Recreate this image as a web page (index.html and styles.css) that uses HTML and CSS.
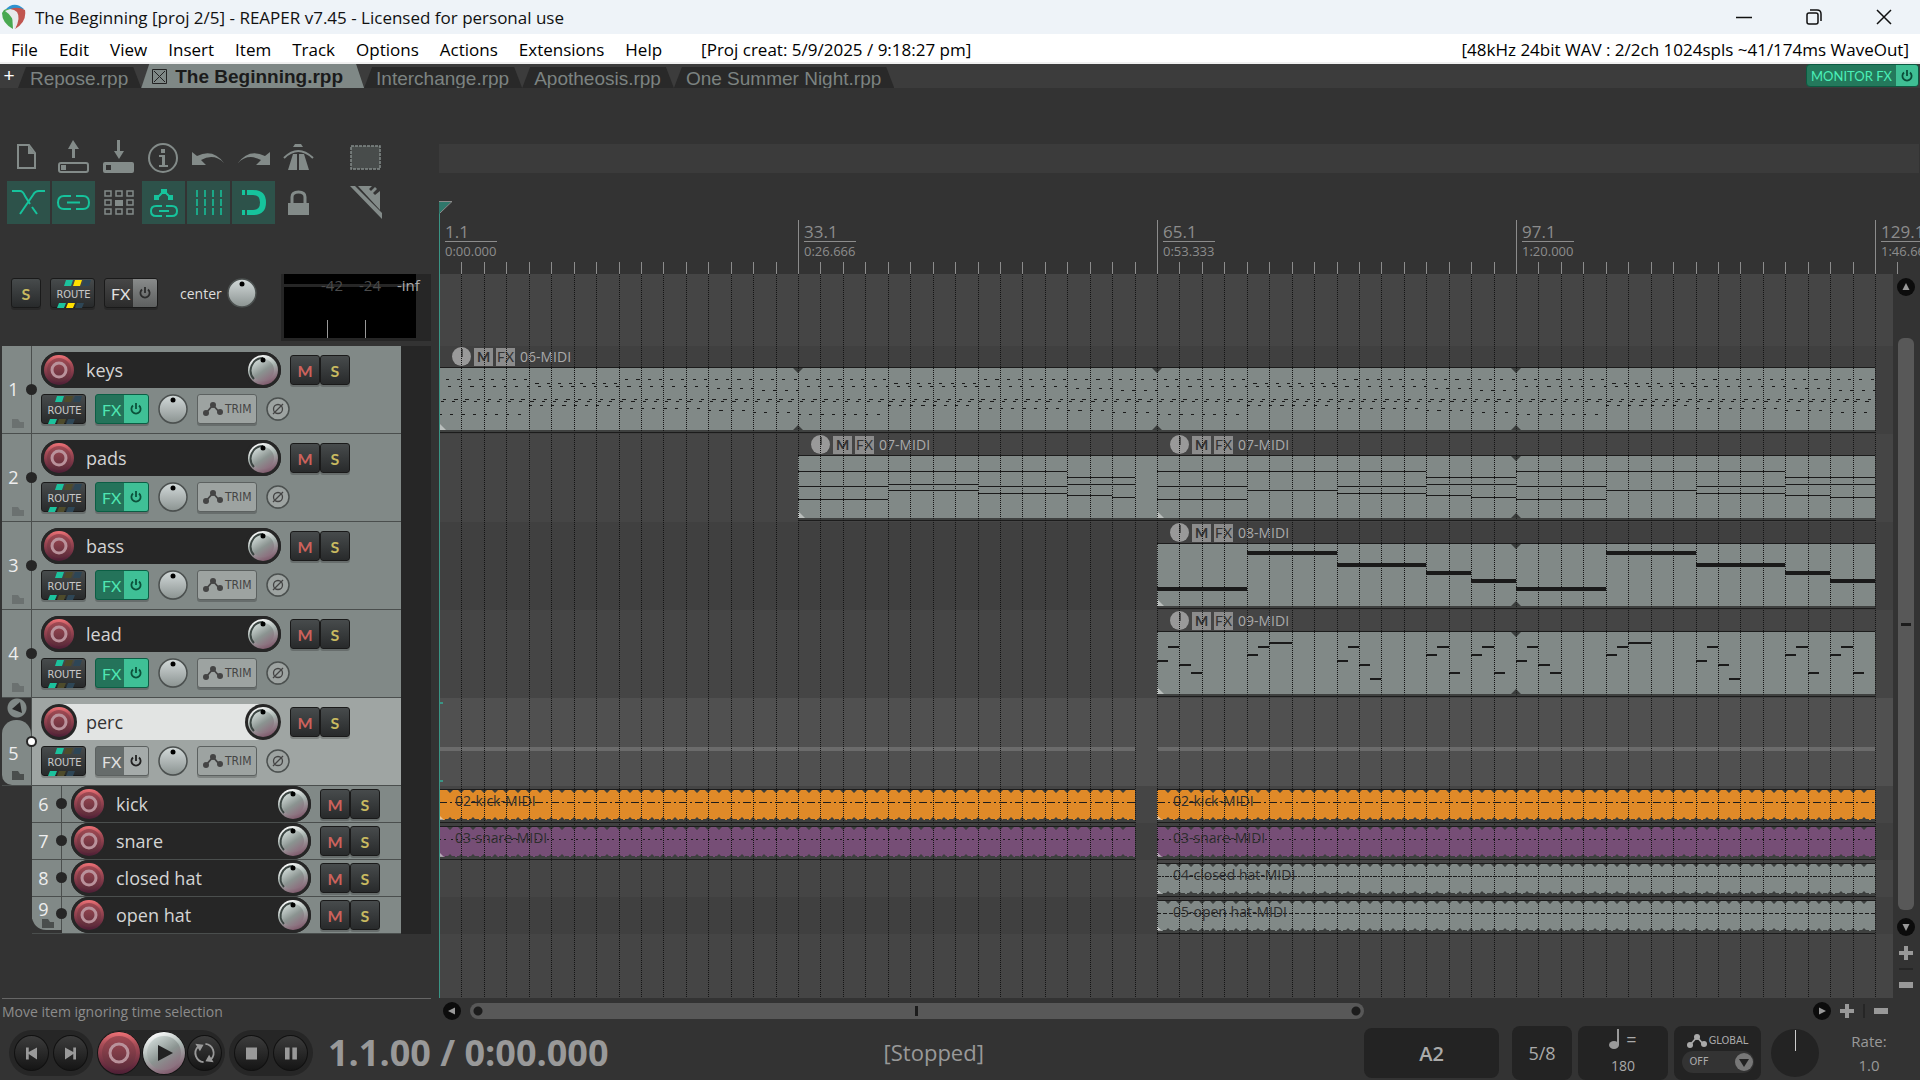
FILE: index.html
```html
<!DOCTYPE html>
<html lang="en">
<head>
    <meta charset="utf-8">
    <title>The Beginning [proj 2/5] - REAPER v7.45</title>
    <meta name="viewport" content="width=device-width, initial-scale=1">
    <link rel="stylesheet" href="styles.css">
</head>
<body>
    <!-- shared icons -->
    <svg class="defs" width="0" height="0" aria-hidden="true">
        <defs>
            <linearGradient id="g-rec" x1="0" y1="0" x2="0" y2="1">
                <stop offset="0" stop-color="#f07277"/><stop offset=".3" stop-color="#a74d57"/><stop offset="1" stop-color="#4d1f35"/>
            </linearGradient>
            <linearGradient id="g-rec-in" x1="0" y1="0" x2="0" y2="1">
                <stop offset="0" stop-color="#a04a53"/><stop offset="1" stop-color="#5c2c3a"/>
            </linearGradient>
            <linearGradient id="g-vol" x1=".3" y1="0" x2=".7" y2="1">
                <stop offset="0" stop-color="#fff"/><stop offset=".45" stop-color="#a9b5b1"/><stop offset="1" stop-color="#7d5468"/>
            </linearGradient>
            <linearGradient id="g-vol-in" x1=".2" y1=".1" x2=".8" y2="1">
                <stop offset="0" stop-color="#c9d3d0"/><stop offset=".5" stop-color="#8b9491"/><stop offset="1" stop-color="#8d6a7c"/>
            </linearGradient>
            <linearGradient id="g-pan" x1="0" y1="0" x2="0" y2="1">
                <stop offset="0" stop-color="#d3dada"/><stop offset="1" stop-color="#8b9391"/>
            </linearGradient>
        </defs>
        <symbol id="rec" viewBox="0 0 36 36">
            <circle cx="18" cy="18" r="18" fill="#262626"/>
            <circle cx="18" cy="18" r="15" fill="url(#g-rec)"/>
            <circle cx="18" cy="18" r="12" fill="url(#g-rec-in)"/>
            <circle cx="18" cy="18" r="7" fill="none" stroke="#b9929b" stroke-width="3"/>
        </symbol>
        <symbol id="volume" viewBox="0 0 36 36">
            <circle cx="18" cy="18" r="18" fill="#262626"/>
            <circle cx="18" cy="18" r="15" fill="url(#g-vol)"/>
            <circle cx="18" cy="18" r="11" fill="url(#g-vol-in)"/>
            <path d="M9 27A12.500 12.500 0 0 1 18 6" fill="none" stroke="#3b4542" stroke-width="2"/>
            <circle cx="18" cy="8" r="2.500" fill="#000"/>
        </symbol>
        <symbol id="pan" viewBox="0 0 30 30">
            <circle cx="15" cy="16" r="14" fill="#0003"/>
            <circle cx="15" cy="15" r="14" fill="url(#g-pan)" stroke="#4b504f" stroke-width="1.500"/>
            <circle cx="15" cy="6" r="2.500" fill="#000"/>
        </symbol>
        <symbol id="power" viewBox="0 0 14 14">
            <path d="M4 3.500a4.600 4.600 0 1 0 6 0M7 1v6" fill="none" stroke="currentColor" stroke-width="1.800"/>
        </symbol>
        <symbol id="stripes" viewBox="0 0 45 30">
            <path d="M15 1h7l-2 6h-7zM8 24h7l-2 5H6z" fill="#1cc29d"/>
            <path class="mid" d="M24 1h7l-2 6h-7zM17 24h7l-2 5h-7z"/>
            <path d="M33 1h7l-2 6h-7zM26 24h7l-2 5h-7z" fill="#2e4656"/>
        </symbol>
        <symbol id="env" viewBox="0 0 20 14">
            <path d="M3 11l7-8 7 8" fill="none" stroke="currentColor" stroke-width="1.800"/>
            <circle cx="3" cy="11" r="3" fill="currentColor"/><circle cx="10" cy="3" r="3" fill="currentColor"/><circle cx="17" cy="10" r="3" fill="currentColor"/>
        </symbol>
        <symbol id="phase" viewBox="0 0 24 25">
            <circle cx="12" cy="13" r="11" fill="#0003"/>
            <circle cx="12" cy="12" r="11" fill="#9da3a1" stroke="#4b504f" stroke-width="1.500"/>
            <circle cx="12" cy="12" r="4.500" fill="none" stroke="#444" stroke-width="1.300"/><path d="M7 17L17 7" stroke="#444" stroke-width="1.300"/>
        </symbol>
        <symbol id="folder" viewBox="0 0 12 9"><path d="M0 0h6l2 3h4v6H0z" fill="currentColor"/></symbol>
        <symbol id="arrow" viewBox="0 0 18 18"><circle cx="9" cy="9" r="9" fill="#0c0c0c"/><path d="M9 5l3.500 7h-7z" fill="#999"/></symbol>
        <symbol id="plus" viewBox="0 0 14 14"><path d="M5 0h4v5h5v4H9v5H5V9H0V5h5z" fill="#999"/></symbol>
        <symbol id="minus" viewBox="0 0 14 14"><path d="M0 4h14v6H0z" fill="#999"/></symbol>
    </svg>

    <header class="titlebar">
        <svg class="logo" width="24" height="26" viewBox="0 0 24 26">
            <path d="M3 6Q12-4 22 5l-5 3Q9 3 3 6z" fill="#2e93d0"/>
            <path d="M2 6q6-3 8 2l1 17Q0 19 0 9z" fill="#49a851"/>
            <path d="M8 5q8-3 15 1 2 12-10 19 4-9 1-14-2-4-6-6z" fill="#c0554f"/>
            <path d="M3 7q7-4 12 1 4 6-2 17l-1 0Q13 13 3 7z" fill="#e7eaec"/>
        </svg>
        <h1>The Beginning [proj 2/5] - REAPER v7.45 - Licensed for personal use</h1>
        <div class="window-buttons">
            <button type="button" aria-label="Minimize"><svg width="16" height="16" viewBox="0 0 16 16"><path d="M0 8.500h16"/></svg></button>
            <button type="button" aria-label="Restore"><svg width="16" height="16" viewBox="0 0 16 16"><rect x="1" y="4" width="11" height="11" rx="2"/><path d="M4 1h7q4 0 4 4v7"/></svg></button>
            <button type="button" aria-label="Close"><svg width="16" height="16" viewBox="0 0 16 16"><path d="M1 1l14 14M15 1L1 15"/></svg></button>
        </div>
    </header>

    <nav class="menubar">
        <a href="#">File</a>
        <a href="#">Edit</a>
        <a href="#">View</a>
        <a href="#">Insert</a>
        <a href="#">Item</a>
        <a href="#">Track</a>
        <a href="#">Options</a>
        <a href="#">Actions</a>
        <a href="#">Extensions</a>
        <a href="#">Help</a>
        <span class="created">[Proj creat: 5/9/2025 / 9:18:27 pm]</span>
        <span class="audio">[48kHz 24bit WAV : 2/2ch 1024spls ~41/174ms WaveOut]</span>
    </nav>

    <div class="tabs">
        <button type="button" class="add-tab">+</button>
        <button type="button" class="tab">Repose.rpp</button>
        <button type="button" class="tab active"><svg width="15" height="15" viewBox="0 0 15 15"><path d="M.5.500h14v14H.5zM2 2l11 11M13 2L2 13"/></svg>The Beginning.rpp</button>
        <button type="button" class="tab">Interchange.rpp</button>
        <button type="button" class="tab">Apotheosis.rpp</button>
        <button type="button" class="tab">One Summer Night.rpp</button>
        <button type="button" class="monitor-fx">MONITOR FX<i><svg width="14" height="14"><use href="#power"/></svg></i></button>
    </div>

    <main class="workspace">
        <section class="left">
            <div class="toolbar">
                <button type="button" aria-label="New project"><svg viewBox="0 0 43 43"><path class="line" d="M11 9h11l6 8v15H11z"/><path d="M21 9v9h7z"/></svg></button>
                <button type="button" aria-label="Open project"><svg viewBox="0 0 43 43"><rect class="line" x="7" y="27" width="29" height="9" rx="2"/><path d="M9 29h5v5H9zM20 22V13h-4l5-9 6 9h-4v9z"/></svg></button>
                <button type="button" aria-label="Save project"><svg viewBox="0 0 43 43"><path fill-rule="evenodd" d="M8 26h27q2 0 2 2v7q0 2-2 2H8q-2 0-2-2v-7q0-2 2-2zm1 3v5h5v-5zM20 4v11h-3l5 8 5-8h-4V4z"/></svg></button>
                <button type="button" aria-label="Project settings"><svg viewBox="0 0 43 43"><circle class="line" cx="21" cy="22" r="14"/><path d="M19 13h4v4h-4zM17 19h6v10h3v2h-9v-2h3v-8h-3z"/></svg></button>
                <button type="button" aria-label="Undo"><svg viewBox="0 0 43 43"><path d="M5 16v13h14l-5-5q13-7 23 3Q26 12 10 20z"/></svg></button>
                <button type="button" aria-label="Redo"><svg viewBox="0 0 43 43"><path d="M38 16v13H24l5-5Q16 17 6 27q11-15 27-7z"/></svg></button>
                <button type="button" aria-label="Metronome"><svg viewBox="0 0 43 43"><path class="line" d="M7 22q14-14 29 0"/><path d="M18 8h6l2 3H16zM16 18h4v16h-9zM22 18h5l5 16H22z"/></svg></button>
                <button type="button" class="apart" aria-label="Marquee"><svg viewBox="0 0 43 43"><rect x="7" y="10" width="29" height="23" fill="#484c4b" stroke="#838b89" stroke-width="1.500" stroke-dasharray="3 1"/></svg></button>

                <button type="button" class="on" aria-label="Auto-crossfade"><svg viewBox="0 0 43 43"><path class="line" d="M5 10h8q3 0 5 5l5 8M25 26l5 7M13 33l13-19q2-4 6-4h6"/></svg></button>
                <button type="button" class="on" aria-label="Item grouping"><svg viewBox="0 0 43 43"><path class="line" d="M19 15h-7q-6 0-6 6.500t6 6.500h7M24 15h7q6 0 6 6.500t-6 6.500h-7M15 21.500h13"/></svg></button>
                <button type="button" aria-label="Ripple editing"><svg viewBox="0 0 43 43"><path class="thin" d="M8 10h6v5H8zM19 10h6v5h-6zM30 10h6v5h-6zM8 19h6v5H8zM30 19h6v5h-6zM8 28h6v5H8zM19 28h6v5h-6zM30 28h6v5h-6z"/><path d="M18 19h8v6h-8z"/></svg></button>
                <button type="button" class="on" aria-label="Move envelopes with items"><svg viewBox="0 0 43 43"><path class="line" d="M15 17l7-7 7 7M20 25h-6q-5 0-5 5t5 5h6M24 25h6q5 0 5 5t-5 5h-6M17 30h10"/><path d="M19 8h6v5h-6zM12 14h5v5h-5zM26 14h5v5h-5z"/></svg></button>
                <button type="button" class="on" aria-label="Grid lines"><svg viewBox="0 0 43 43"><path class="thin" d="M10 9v25M18 9v25M26 9v25M34 9v25" stroke-dasharray="7 2"/></svg></button>
                <button type="button" class="on" aria-label="Snapping"><svg viewBox="0 0 43 43"><path d="M15 9h6q13 0 13 12.500T21 34h-6v-5h6q7 0 7-7.500T21 14h-6zM10 9h3v5h-3zM10 29h3v5h-3z"/></svg></button>
                <button type="button" aria-label="Locking"><svg viewBox="0 0 43 43"><path d="M11 22h21v12H11z"/><path d="M15 22v-6q0-5 6.500-5t6.500 5v6" fill="none" stroke="#838b89" stroke-width="3"/></svg></button>
                <button type="button" class="apart" aria-label="Razor edit"><svg viewBox="0 0 43 43"><path d="M6 5h5l27 27v6zM14 5h14l-3 3 2 2 4-4 2 2-4 4 2 2 5-4v19z"/></svg></button>
            </div>

            <div class="master">
                <button type="button" class="btn solo">S</button>
                <button type="button" class="btn route bright"><svg width="45" height="30"><use href="#stripes"/></svg><span>ROUTE</span></button>
                <button type="button" class="btn fx dim">FX<i><svg width="14" height="14"><use href="#power"/></svg></i></button>
                <label class="pan-label">center <span class="knob pan"><svg><use href="#pan"/></svg><input type="range"></span></label>
                <div class="meter"><div class="screen"><span>-42</span><span>-24</span><span class="peak">-inf</span></div></div>
            </div>

            <div class="tracks"></div>

            <p class="status">Move item ignoring time selection</p>
        </section>

        <section class="right">
            <div class="region-lane"></div>
            <div class="ruler"></div>
            <div class="arrange">
                <div class="lanes"></div>
                <div class="vscroll">
                    <button type="button" aria-label="Scroll up"><svg width="18" height="18"><use href="#arrow"/></svg></button>
                    <div class="v-track"><div class="v-thumb"></div></div>
                    <button type="button" aria-label="Scroll down"><svg width="18" height="18" class="down"><use href="#arrow"/></svg></button>
                    <button type="button" aria-label="Zoom in vertically"><svg width="14" height="14"><use href="#plus"/></svg></button>
                    <hr>
                    <button type="button" aria-label="Zoom out vertically"><svg width="14" height="14"><use href="#minus"/></svg></button>
                </div>
            </div>
            <div class="hscroll">
                <button type="button" aria-label="Scroll left"><svg width="18" height="18" class="left-arrow"><use href="#arrow"/></svg></button>
                <div class="h-track"><div class="h-thumb"></div></div>
                <button type="button" aria-label="Scroll right"><svg width="18" height="18" class="right-arrow"><use href="#arrow"/></svg></button>
                <button type="button" aria-label="Zoom in"><svg width="14" height="14"><use href="#plus"/></svg></button>
                <i></i>
                <button type="button" aria-label="Zoom out"><svg width="14" height="14"><use href="#minus"/></svg></button>
            </div>
        </section>
    </main>

    <footer class="transport">
        <div class="group">
            <button type="button" aria-label="Go to start"><svg viewBox="0 0 36 36"><path d="M12 12h3v5l9-5v13l-9-6v6h-3z"/></svg></button>
            <button type="button" aria-label="Go to end"><svg viewBox="0 0 36 36"><path d="M24 12h-3v5l-9-5v13l9-6v6h3z"/></svg></button>
        </div>
        <div class="group tight">
            <button type="button" class="record" aria-label="Record"><svg viewBox="0 0 44 44"><circle cx="22" cy="22" r="22" fill="#151515"/><circle cx="22" cy="22" r="21" fill="url(#g-rec)"/><circle cx="22" cy="22" r="17" fill="url(#g-rec-in)"/><circle cx="22" cy="22" r="9" fill="none" stroke="#b9929b" stroke-width="3"/></svg></button>
            <button type="button" class="play" aria-label="Play"><svg viewBox="0 0 44 44"><circle cx="22" cy="22" r="22" fill="#151515"/><circle cx="22" cy="22" r="21" fill="url(#g-vol)"/><circle cx="22" cy="22" r="17" fill="url(#g-vol-in)"/><path d="M16 14v16l15-8z" fill="#222"/></svg></button>
            <button type="button" aria-label="Repeat"><svg viewBox="0 0 36 36"><path d="M17 28A10 10 0 0 1 11 11M19 8A10 10 0 0 1 25 25" fill="none" stroke="#999" stroke-width="2"/><path d="M8 8l9 1-4 7zM28 28l-9-1 4-7z"/></svg></button>
        </div>
        <div class="group">
            <button type="button" aria-label="Stop"><svg viewBox="0 0 36 36"><path d="M12 12h12v13H12z"/></svg></button>
            <button type="button" aria-label="Pause"><svg viewBox="0 0 36 36"><path d="M12 12h5v13h-5zM20 12h5v13h-5z"/></svg></button>
        </div>
        <output class="time">1.1.00 / 0:00.000</output>
        <output class="state">[Stopped]</output>
        <div class="box tuner">A2</div>
        <div class="box signature">5/8</div>
        <div class="box tempo"><span><svg width="11" height="20" viewBox="0 0 11 20"><ellipse cx="5" cy="16" rx="5" ry="4" fill="#999"/><path d="M9 0v16" stroke="#999" stroke-width="2"/></svg> =</span><span>180</span></div>
        <div class="box global"><span><svg width="20" height="14"><use href="#env"/></svg>GLOBAL</span>
            <button type="button">OFF<svg width="18" height="18" viewBox="0 0 18 18"><circle cx="9" cy="9" r="9" fill="#777"/><path d="M4 6h10l-5 8z" fill="#222"/></svg></button>
        </div>
        <span class="rate-knob"><input type="range" aria-label="Rate"></span>
        <div class="rate"><span>Rate:</span><span>1.0</span></div>
    </footer>

    <script src="script.js"></script>
</body>
</html>
```
FILE: styles.css
```css
*,
*::before,
*::after {
    box-sizing: border-box;
    margin: 0;
    padding: 0;
}

body {
    min-height: 100vh;
    display: flex;
    flex-direction: column;
    overflow: hidden;
    background: #333;
    color: #999;
    font-family: "Open Sans", "Noto Sans", sans-serif;
    font-size: 16px;
}

button {
    border: 0;
    background: none;
    color: inherit;
    font: inherit;
}

svg {
    display: block;
}

.defs {
    position: absolute;
}

/* title and menu */
.titlebar {
    height: 34px;
    display: flex;
    align-items: center;
    background: #eef3f8;
    color: #111;
    padding: 0 28px 0 2px;
}

.titlebar h1 {
    flex: 1;
    margin-left: 9px;
    font-size: 17px;
    font-weight: normal;
}

.window-buttons {
    display: flex;
    gap: 54px;
}

.window-buttons svg {
    fill: none;
    stroke: #111;
    stroke-width: 1.5;
}

.menubar {
    height: 30px;
    display: flex;
    align-items: center;
    gap: 21px;
    padding: 2px 11px 0;
    background: #fff;
    border-bottom: 2px solid #f0f0f0;
    color: #000;
    font-size: 17px;
    white-space: nowrap;
}

.menubar a {
    color: #000;
    text-decoration: none;
}

.created {
    margin-left: 18px;
}

.audio {
    margin-left: auto;
}

/* project tabs */
.tabs {
    height: 24px;
    display: flex;
    align-items: flex-end;
    background: #3c3c3c;
    font-family: "Liberation Sans", Arial, sans-serif;
    font-size: 19px;
}

.add-tab {
    width: 18px;
    height: 24px;
    color: #fff;
    line-height: 24px;
}

.tab {
    height: 21px;
    padding: 1px 13px 0 12px;
    background: #292929;
    color: #7c8381;
    line-height: 21px;
    white-space: nowrap;
    clip-path: polygon(8px 0, calc(100% - 8px) 0, 100% 100%, 0 100%);
}

.tab.active {
    height: 24px;
    display: flex;
    align-items: center;
    gap: 8px;
    padding: 1px 21px 0 11px;
    background: #7f8886;
    color: #1b1b1b;
    font-weight: bold;
}

.tab svg {
    fill: none;
    stroke: #222;
}

.monitor-fx {
    height: 23px;
    margin: 0 1px 1px auto;
    display: flex;
    align-items: center;
    gap: 4px;
    padding-left: 4px;
    border: 1px solid #0c5a41;
    border-radius: 4px;
    background: #24795c;
    color: #4bf0b8;
    font: 13px Lato, sans-serif;
}

.monitor-fx i {
    width: 22px;
    height: 21px;
    display: grid;
    place-items: center;
    background: #3fbf94;
    color: #0b4d38;
    border-radius: 0 3px 3px 0;
}

/* main split */
.workspace {
    flex: 1;
    display: grid;
    grid-template-columns: 439px minmax(0, 1fr);
}

.left,
.right {
    display: flex;
    flex-direction: column;
    min-width: 0;
}

.toolbar {
    height: 186px;
    display: grid;
    grid-template-columns: repeat(7, 43px) 77px;
    grid-template-rows: 43px 43px;
    gap: 2px;
    padding: 48px 0 0 7px;
}

.toolbar svg {
    width: 43px;
    height: 43px;
    fill: #838b89;
}

.toolbar .line,
.toolbar .thin {
    fill: none;
    stroke: #838b89;
    stroke-width: 2;
}

.toolbar .thin {
    stroke-width: 1.5;
}

.toolbar .on {
    background: #2d524a;
}

.toolbar .on svg {
    fill: #16c39c;
}

.toolbar .on .line,
.toolbar .on .thin {
    stroke: #16c39c;
}

.toolbar .apart {
    padding-left: 22px;
}

/* buttons used by the strips */
.btn {
    height: 30px;
    border: 1px solid #1a1a1a;
    border-radius: 3px;
    background: linear-gradient(#474b4c, #282a2b);
    box-shadow: 0 2px 0 #0003;
    font: 16px Lato, sans-serif;
}

.mute,
.solo {
    width: 30px;
    font-weight: bold;
}

.mute {
    color: #cc625c;
}

.solo {
    color: #c9ba60;
}

.route {
    width: 45px;
    display: grid;
    place-items: center;
    color: #c8c8c8;
    font: 11px "DejaVu Sans Condensed", "DejaVu Sans", sans-serif;
}

.route svg,
.route span {
    grid-area: 1 / 1;
}

.route svg {
    fill: #4e4b2b;
}

.route.bright svg {
    fill: #ffe000;
}

.fx {
    width: 54px;
    display: flex;
    align-items: center;
    padding-left: 6px;
    border-color: #0b5e44;
    background: #24735a;
    color: #4fe6b2;
    overflow: hidden;
}

.fx i {
    width: 24px;
    height: 30px;
    margin-left: auto;
    display: grid;
    place-items: center;
    background: #3fc096;
    color: #0c523b;
}

.fx.off {
    border-color: #5c6160;
    background: #666c6b;
    color: #e0e0e0;
}

.fx.off i {
    background: #a5abaa;
    color: #222;
}

.fx.dim {
    border-color: #1a1a1a;
    background: linear-gradient(#474747, #2c2c2c);
    color: #e0e0e0;
}

.fx.dim i {
    background: linear-gradient(#8a8c8c, #5c5e5e);
    color: #2c2c2c;
}

.knob {
    position: relative;
    display: block;
}

.knob svg {
    width: 100%;
    height: 100%;
}

.knob input,
.rate-knob input {
    position: absolute;
    inset: 0;
    width: 100%;
    height: 100%;
    opacity: 0;
}

.pan {
    width: 30px;
    height: 30px;
}

.volume,
.arm {
    width: 36px;
    height: 36px;
}

.arm svg {
    width: 36px;
    height: 36px;
}

/* master strip */
.master {
    height: 72px;
    display: flex;
    gap: 9px;
    padding: 4px 8px 5px 11px;
}

.pan-label {
    height: 30px;
    display: flex;
    align-items: center;
    gap: 5px;
    margin-left: 13px;
    color: #ddd;
    font-size: 14px;
}

.meter {
    width: 150px;
    height: 67px;
    margin: -4px 0 0 auto;
    padding-left: 3px;
    background: #262626;
}

.screen {
    width: 132px;
    height: 64px;
    display: flex;
    justify-content: flex-end;
    gap: 16px;
    background:
        linear-gradient(#999, #999) 43px 46px / 1px 18px no-repeat,
        linear-gradient(#999, #999) 81px 46px / 1px 18px no-repeat,
        linear-gradient(#262626, #262626) 0 10px / 100% 3px no-repeat,
        #000;
    color: #4c4c4c;
    font-size: 15px;
    line-height: 22px;
    white-space: nowrap;
}

.screen .peak {
    width: 19px;
    color: #aaa;
}

/* track panel */
.tracks {
    flex: 1;
}

.track {
    height: 88px;
    display: flex;
    width: 399px;
    margin-left: 2px;
    background: #818987;
    border-bottom: 1px solid #4a4e4d;
    box-shadow: 30px 0 0 #262626;
}

.track.selected {
    background: #9fa5a3;
}

.track.small {
    height: 37px;
    width: 369px;
    margin-left: 32px;
}

.gutter {
    width: 30px;
    position: relative;
    display: flex;
    flex-direction: column;
    align-items: center;
    justify-content: flex-end;
    gap: 20px;
    padding: 0 6px 5px 0;
    border-right: 1px solid #4a4e4d;
    color: #eee;
    font-size: 18px;
    line-height: 20px;
}

.gutter .folder {
    margin-left: 8px;
    color: #6b7170;
}

.gutter::after {
    content: "";
    position: absolute;
    right: -6px;
    top: 50%;
    width: 11px;
    height: 11px;
    margin-top: -6px;
    border-radius: 50%;
    background: #262626;
}

.small .gutter {
    justify-content: center;
    padding-bottom: 0;
}

.selected .gutter {
    gap: 8px;
    background: radial-gradient(circle at 15px 10px, #818987 9px, #333 10px) 0 0 / 100% 22px no-repeat, #333;
    z-index: 0;
}

.selected .gutter::before {
    content: "";
    position: absolute;
    z-index: -1;
    inset: 22px 0 0 0;
    border-radius: 14px 14px 0 10px;
    background: #818987;
}

.selected .gutter::after {
    background: #fff;
    border: 2px solid #262626;
}

.collapse {
    position: absolute;
    left: 9px;
    top: 4px;
}

.selected .folder,
.last .folder {
    color: #4a4e4d;
}

.last .gutter {
    height: 33px;
    gap: 0;
    border-radius: 0 0 0 14px;
    background: #818987;
}

.track.last {
    background: linear-gradient(#333, #333) 0 100% / 30px 14px no-repeat, #818987;
}

.strip {
    flex: 1;
    padding: 6px 0 0 9px;
}

.small .strip {
    padding-top: 0;
}

.strip-row {
    display: flex;
    align-items: center;
    gap: 9px;
    height: 36px;
}

.strip-row + .strip-row {
    height: 30px;
    margin-top: 6px;
}

.name-bar {
    width: 240px;
    height: 36px;
    display: flex;
    align-items: center;
    border-radius: 18px;
    background: #262626;
}

.name-bar .name {
    flex: 1;
    padding-left: 9px;
    color: #d4d4d4;
    font-size: 18px;
}

.selected .name-bar {
    background: #e2e4e3;
}

.selected .name-bar .name {
    color: #333;
}

.mute-solo {
    display: flex;
}

.trim {
    width: 60px;
    display: flex;
    align-items: center;
    gap: 2px;
    padding-left: 5px;
    border-color: #5c6160;
    background: #9da3a1;
    color: #444;
    font: 12px "DejaVu Sans Condensed", "DejaVu Sans", sans-serif;
}

.status {
    height: 26px;
    margin: 0 8px 0 2px;
    padding-top: 3px;
    border-top: 1px solid #666;
    color: #8c8c8c;
    font-size: 14px;
    line-height: 20px;
}

/* timeline */
.region-lane {
    height: 29px;
    margin: 56px 1px 0 0;
    background: #3b3b3b;
}

.ruler {
    height: 101px;
    position: relative;
    overflow: hidden;
    color: #8c8c8c;
}

.ruler svg,
.lanes > svg {
    position: absolute;
    left: 0;
    top: 0;
    width: 100%;
    height: 100%;
    pointer-events: none;
}

.mark {
    position: absolute;
    top: 47px;
    padding-left: 6px;
}

.mark b {
    display: block;
    width: 52px;
    height: 22px;
    border-bottom: 1px solid #8c8c8c;
    font-size: 17px;
    font-weight: normal;
    line-height: 24px;
}

.mark span {
    display: block;
    font-size: 13px;
    line-height: 19px;
}

.arrange {
    flex: 1;
    display: flex;
}

.lanes {
    flex: 1;
    position: relative;
    overflow: hidden;
    background: #454545;
}

.lane {
    position: relative;
    height: 88px;
}

.lane.master-lane {
    height: 72px;
}

.lane.small {
    height: 37px;
}

.lane.odd {
    background: #404040;
}

.lane.selected {
    background: #505050;
}

.item {
    position: absolute;
    top: 0;
    bottom: 0;
    display: flex;
    flex-direction: column;
}

.item-head {
    height: 21px;
    display: flex;
    align-items: center;
    gap: 3px;
    padding-left: 13px;
    color: #aaa;
    font-size: 14px;
    white-space: nowrap;
}

.item-head i {
    width: 19px;
    height: 19px;
    border-radius: 50%;
    background: linear-gradient(#555, #555) 9px 2px / 2px 8px no-repeat, #999;
}

.item-head button {
    width: 19px;
    height: 18px;
    background: #8c8c8c;
    color: #333;
    font: 14px/18px Lato, sans-serif;
    text-align: center;
}

.item-head button:first-of-type {
    font-weight: bold;
}

.item-head span {
    padding-left: 2px;
}

.item-body {
    height: 66px;
    border-top: 1px solid #1c1c1c;
    border-bottom: 1px solid #1c1c1c;
    background: #3f4140;
    overflow: hidden;
}

.item-body svg {
    width: 100%;
    height: 62px;
    background: #818987;
}

.small .item-body {
    height: 34px;
    margin-top: 3px;
    position: relative;
}

.small .item-body svg {
    height: 30px;
}

.item-body.kick svg {
    background: #e08a28;
}

.item-body.snare svg {
    background: #764e76;
}

.item-body p {
    position: absolute;
    left: 16px;
    top: 2px;
    color: #2e2e2e;
    font-size: 14px;
    line-height: 18px;
    white-space: nowrap;
}

.ghost {
    position: absolute;
    top: 49px;
    height: 4px;
    background: #6b6b6b;
}

.vscroll {
    width: 27px;
    display: flex;
    flex-direction: column;
    align-items: center;
    padding: 4px 1px 4px 0;
}

.vscroll button {
    height: 18px;
    display: grid;
    place-items: center;
}

.vscroll .v-track + button {
    margin-bottom: 8px;
}

.vscroll hr {
    width: 14px;
    margin: 6px 0 6px;
    border: 0;
    border-top: 2px solid #262626;
}

.v-track {
    flex: 1;
    width: 16px;
    padding: 42px 0 8px;
}

.v-thumb {
    height: 100%;
    border-radius: 6px;
    background: linear-gradient(#1c1c1c, #1c1c1c) 50% 50% / 10px 3px no-repeat, #585858;
}

.down {
    transform: rotate(180deg);
}

.left-arrow {
    transform: rotate(-90deg);
}

.right-arrow {
    transform: rotate(90deg);
}

.hscroll {
    height: 26px;
    display: flex;
    align-items: center;
    padding: 0 32px 0 4px;
    gap: 9px;
}

.hscroll i {
    width: 2px;
    height: 14px;
    background: #262626;
}

.h-track {
    flex: 1;
}

.h-thumb {
    width: 67%;
    height: 16px;
    border-radius: 8px;
    background:
        radial-gradient(circle at 8px 8px, #1c1c1c 4px, transparent 5px),
        radial-gradient(circle at calc(100% - 8px) 8px, #1c1c1c 4px, transparent 5px),
        linear-gradient(#1c1c1c, #1c1c1c) 50% 50% / 3px 10px no-repeat,
        #585858;
}

/* transport */
.transport {
    height: 56px;
    display: flex;
    align-items: center;
    padding: 2px 33px 0 9px;
}

.group {
    height: 46px;
    display: flex;
    align-items: center;
    gap: 4px;
    margin-right: 4px;
    padding: 0 5px;
    border-radius: 23px;
    background: #262626;
}

.group.tight {
    gap: 1px;
    padding: 0 3px 0 0;
}

.group svg {
    width: 35px;
    height: 36px;
    border: 1px solid #111;
    border-radius: 50%;
    background: linear-gradient(#3c3c3c, #151515);
    fill: #999;
}

.group .record svg,
.group .play svg {
    width: 44px;
    height: 44px;
    border: 0;
}

.time {
    margin-left: 11px;
    color: #999;
    font-size: 36px;
    font-weight: 700;
    line-height: 44px;
}

.state {
    flex: 1;
    text-align: center;
    padding: 0 105px 2px 0;
    font-size: 22px;
}

.box {
    height: 54px;
    display: flex;
    flex-direction: column;
    align-items: center;
    justify-content: center;
    border-radius: 8px;
    margin-right: 6px;
    background: #232323;
    color: #aaa;
}

.tuner {
    width: 135px;
    height: 50px;
    margin-right: 13px;
    font-size: 20px;
    font-weight: 600;
}

.signature {
    width: 60px;
    font-size: 18px;
}

.tempo {
    width: 90px;
    padding-bottom: 2px;
    font-size: 14px;
    justify-content: space-around;
}

.tempo span:first-child {
    display: flex;
    gap: 6px;
    font-size: 18px;
    line-height: 20px;
}

.global {
    width: 87px;
    gap: 3px;
    margin-right: 10px;
    font: 11px "DejaVu Sans Condensed", "DejaVu Sans", sans-serif;
}

.global span {
    display: flex;
    align-items: center;
    gap: 2px;
}

.global button {
    width: 72px;
    height: 22px;
    display: flex;
    align-items: center;
    justify-content: space-between;
    padding: 0 1px 0 8px;
    border-radius: 11px;
    background: #333;
}

.rate-knob {
    position: relative;
    width: 48px;
    height: 48px;
    border-radius: 50%;
    background: linear-gradient(#ccc, #ccc) 24px 1px / 1px 21px no-repeat, #232323;
}

.rate {
    width: 36px;
    margin-left: 32px;
    display: flex;
    flex-direction: column;
    align-items: center;
    font-size: 15px;
    line-height: 24px;
}
```
FILE: script.js
```js
const PX_PER_BAR = 359 / 32;
const x = bar => Math.round(bar * PX_PER_BAR);

// [startBar, endBar, y] inside a 32 bar loop
const pads = [[0, 24, 15], [0, 8, 30], [0, 8, 43], [8, 16, 34], [16, 24, 30], [16, 24, 37], [24, 32, 21], [24, 32, 28], [24, 28, 39], [28, 32, 41]];
const bass = [[0, 8, 43], [8, 16, 7], [16, 24, 19], [24, 28, 27], [28, 32, 35]];
const lead = [[0, 1, 28], [1, 2, 14], [2, 3, 32], [3, 4, 40], [8, 9, 22], [9, 10, 14], [10, 12, 10], [16, 17, 28], [17, 18, 14], [18, 19, 32], [19, 20, 46],
    [24, 25, 22], [25, 26, 14], [26, 27, 40], [28, 29, 22], [29, 30, 14], [30, 31, 40]];

const keys = [];
for (let bar = 0; bar < 32; bar++) {
    const high = bar >= 8 && bar < 16 ? 15 : 11;
    const second = bar < 24 ? 18 : bar < 28 ? 20 : 22;
    const low = bar < 8 ? 46 : bar < 16 ? 37 : bar < 24 ? 40 : bar < 28 ? 42 : 44;
    keys.push([bar, bar + 0.28, low], [bar + 0.15, bar + 0.43, 33], [bar + 0.35, bar + 0.65, 31], [bar + 0.6, bar + 0.88, high], [bar + 0.8, bar + 1.08, second]);
}

const tracks = [
    { name: 'keys', items: [{ label: '06-MIDI', start: 0, end: 128, notes: keys, thick: 1 }] },
    { name: 'pads', items: [
        { label: '07-MIDI', start: 32, end: 64, notes: [...pads, [8, 16, 28]], thick: 1, cut: 30 },
        { label: '07-MIDI', start: 64, end: 128, notes: pads, thick: 1 }] },
    { name: 'bass', items: [{ label: '08-MIDI', start: 64, end: 128, notes: bass, thick: 4 }] },
    { name: 'lead', items: [{ label: '09-MIDI', start: 64, end: 128, notes: lead, thick: 2 }] },
    { name: 'perc', selected: true, ghosts: [[0, 62], [64, 128]] },
    { name: 'kick', small: true, color: 'kick', dash: '8 3 2 3', items: [{ label: '02-kick-MIDI', start: 0, end: 62 }, { label: '02-kick-MIDI', start: 64, end: 128 }] },
    { name: 'snare', small: true, color: 'snare', dash: '2 3 2 5', items: [{ label: '03-snare-MIDI', start: 0, end: 62 }, { label: '03-snare-MIDI', start: 64, end: 128 }] },
    { name: 'closed hat', small: true, dash: '4 1 2 1', items: [{ label: '04-closed hat-MIDI', start: 64, end: 128 }] },
    { name: 'open hat', small: true, last: true, dash: '4 2', items: [{ label: '05-open hat-MIDI', start: 64, end: 128 }] }
];

const trackClass = t => `${t.small ? 'small' : ''} ${t.selected ? 'selected' : ''} ${t.last ? 'last' : ''}`;

const trackPanel = (t, i) => `
    <div class="track ${trackClass(t)}">
        <div class="gutter">
            ${t.selected ? '<svg class="collapse" width="12" height="12" viewBox="0 0 12 12"><path d="M9 0L1 7l10 4z" fill="#262626"/></svg>' : ''}
            <span>${i + 1}</span>
            ${!t.small || t.last ? '<svg class="folder" width="12" height="9"><use href="#folder"/></svg>' : ''}
        </div>
        <div class="strip">
            <div class="strip-row">
                <div class="name-bar">
                    <button type="button" class="arm" aria-label="Record arm"><svg><use href="#rec"/></svg></button>
                    <span class="name">${t.name}</span>
                    <span class="knob volume"><svg><use href="#volume"/></svg><input type="range" aria-label="${t.name} volume"></span>
                </div>
                <div class="mute-solo">
                    <button type="button" class="btn mute">M</button>
                    <button type="button" class="btn solo">S</button>
                </div>
            </div>
            ${t.small ? '' : `<div class="strip-row">
                <button type="button" class="btn route"><svg width="45" height="30"><use href="#stripes"/></svg><span>ROUTE</span></button>
                <button type="button" class="btn fx ${t.selected ? 'off' : ''}">FX<i><svg width="14" height="14"><use href="#power"/></svg></i></button>
                <span class="knob pan"><svg><use href="#pan"/></svg><input type="range" aria-label="${t.name} pan"></span>
                <button type="button" class="btn trim"><svg width="20" height="14"><use href="#env"/></svg>TRIM</button>
                <button type="button" aria-label="Phase"><svg width="24" height="25"><use href="#phase"/></svg></button>
            </div>`}
        </div>
    </div>`;

const noteShapes = item => {
    let out = '';
    const length = item.end - item.start;
    for (let loop = 0; loop < length; loop += 32) {
        for (const [from, to, y] of item.notes) {
            const left = x(loop + from);
            const right = x(loop + Math.min(to, item.cut || 32));
            out += `<rect x="${left}" y="${y}" width="${right - left}" height="${item.thick}" fill="#1a1a1a"/>`;
        }
        // loop point notch
        if (loop > 0) {
            const m = x(loop);
            out += `<path d="M${m - 5} 0h10l-5 5zM${m - 5} 62h10l-5-5z" fill="#3c3f3e"/>`;
        }
    }
    return out + '<path d="M0 55l7 7H0z" fill="#b9bebc"/>';
};

const hitShapes = (item, dash) => {
    let out = '';
    for (let bar = 1; bar < item.end - item.start; bar++) {
        const m = x(bar);
        out += `<path d="M${m - 3} 0h6l-3 3zM${m - 3} 30h6l-3-3z" fill="#3c3f3e"/>`;
    }
    return `${out}<path d="M0 12.500H${x(item.end - item.start)}" stroke="#1c1c1c" stroke-dasharray="${dash}"/>
        <path d="M0 29.500H${x(item.end - item.start)}" stroke="#3c3f3e" stroke-dasharray="4 2"/><path d="M0 25l5 5H0z" fill="#ffffff80"/>`;
};

const itemBlock = (t, item) => {
    const style = `left: ${x(item.start)}px; width: ${x(item.end) - x(item.start)}px`;
    if (t.small) {
        return `<div class="item" style="${style}">
                    <div class="item-body ${t.color || ''}"><svg>${hitShapes(item, t.dash)}</svg><p>${item.label}</p></div>
                </div>`;
    }
    return `<div class="item" style="${style}">
                <div class="item-head"><i></i><button type="button">M</button><button type="button">FX</button><span>${item.label}</span></div>
                <div class="item-body"><svg>${noteShapes(item)}</svg></div>
            </div>`;
};

const lane = (t, i) => `
    <div class="lane ${trackClass(t)} ${i % 2 === 0 ? 'odd' : ''}">
        ${(t.items || []).map(item => itemBlock(t, item)).join('')}
        ${(t.ghosts || []).map(([a, b]) => `<div class="ghost" style="left: ${x(a)}px; width: ${x(b) - x(a)}px"></div>`).join('')}
    </div>`;

document.querySelector('.tracks').innerHTML = tracks.map(trackPanel).join('');

// dotted grid, one line every two bars
let grid = '';
let ticks = '';
for (let bar = 2; bar <= 130; bar += 2) {
    const major = bar % 32 === 0;
    ticks += `<path d="M${x(bar) + 0.5} ${major ? 47 : 89}V101" stroke="#8c8c8c"/>`;
    if (bar <= 128) {
        grid += `<path d="M${x(bar) + 0.5} 0V2000" stroke="#141414" stroke-dasharray="1 1"/>`;
    }
}

document.querySelector('.lanes').innerHTML = `
    <div class="lane master-lane"></div>
    ${tracks.map(lane).join('')}
    <svg>${grid}<path d="M.5 0V2000" stroke="#3a9484"/><path d="M0 429h4M0 507h4" stroke="#3a9484" stroke-width="2"/></svg>`;

const marks = [[0, '1.1', '0:00.000'], [32, '33.1', '0:26.666'], [64, '65.1', '0:53.333'], [96, '97.1', '1:20.000'], [128, '129.1', '1:46.666']];
document.querySelector('.ruler').innerHTML = `
    <svg>${ticks}<path d="M.5 28V101" stroke="#3a9484"/><path d="M0 28h13L0 41z" fill="#2f776b"/><path d="M0 28.500h13L1 40" fill="none" stroke="#8c8c8c"/></svg>
    ${marks.map(([bar, beat, time]) => `<div class="mark" style="left: ${x(bar)}px"><b>${beat}</b><span>${time}</span></div>`).join('')}`;
```
